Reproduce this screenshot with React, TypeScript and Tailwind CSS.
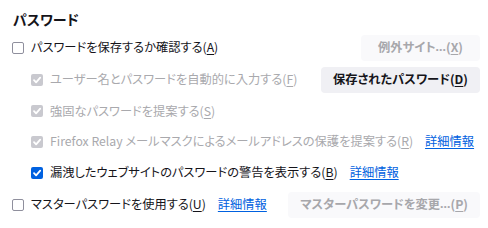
import React from "react";

const font = "font-['Noto_Sans_CJK_JP','Noto_Sans',sans-serif]";

function Box({ state }: { state: "off" | "on" | "dis" }) {
  if (state === "off")
    return <span className="w-[12px] h-[12px] shrink-0 rounded-[2px] border border-[#8f8f9d] bg-white" />;
  const bg = state === "on" ? "bg-[#0061e0]" : "bg-[#c9c9cf]";
  return (
    <span className={`w-[12px] h-[12px] shrink-0 rounded-[2px] ${bg} flex items-center justify-center`}>
      <svg width="10" height="10" viewBox="0 0 10 10">
        <path d="M2 5.2 L4.1 7.3 L8.2 2.7" fill="none" stroke="white" strokeWidth="1.8" strokeLinecap="round" strokeLinejoin="round" />
      </svg>
    </span>
  );
}

function Key({ k }: { k: string }) {
  return (
    <>
      (<span className="underline underline-offset-2">{k}</span>)
    </>
  );
}

function Dots() {
  return <span className="font-['Noto_Sans',sans-serif]">…</span>;
}

function Link() {
  return <span className="text-[#0061e0] underline underline-offset-2 ml-[5px] whitespace-nowrap">詳細情報</span>;
}

function Btn({ children, disabled, wide }: { children: React.ReactNode; disabled?: boolean; wide?: boolean }) {
  return (
    <div
      className={`h-[26px] px-[12px] rounded-[4px] flex items-center justify-center text-[12.25px] font-bold whitespace-nowrap shrink-0 ${
        wide ? "min-w-[119px]" : ""
      } ${disabled ? "bg-[#f9f9fb] text-[#a7a7ab]" : "bg-[#f0f0f4] text-[#15141a]"}`}
    >
      {children}
    </div>
  );
}

export default function App() {
  return (
    <div className={`w-[488px] h-[228px] bg-white text-[#15141a] ${font} [font-feature-settings:'palt'] pl-[12px] pr-[8px] whitespace-nowrap`}>
      <div className="pt-[10px] h-[32px] text-[14px] leading-[18px] font-bold pl-[1px]">パスワード</div>
      <div className="flex flex-col text-[12.25px]">
        <div className="h-[31px] flex items-center justify-between">
          <div className="flex items-center gap-[7px]">
            <Box state="off" />
            <span>パスワードを保存するか確認する<Key k="A" /></span>
          </div>
          <Btn disabled wide>例外サイト<Dots /><Key k="X" /></Btn>
        </div>
        <div className="h-[33px] flex items-center justify-between pl-[19px]">
          <div className="flex items-center gap-[7px] text-[#a9a9ad]">
            <Box state="dis" />
            <span>ユーザー名とパスワードを自動的に入力する<Key k="F" /></span>
          </div>
          <Btn>保存されたパスワード<Key k="D" /></Btn>
        </div>
        <div className="h-[30px] flex items-center pl-[19px]">
          <div className="flex items-center gap-[7px] text-[#a9a9ad]">
            <Box state="dis" />
            <span>強固なパスワードを提案する<Key k="S" /></span>
          </div>
        </div>
        <div className="h-[31px] flex items-center pl-[19px]">
          <div className="flex items-center gap-[7px]">
            <Box state="dis" />
            <span className="text-[#a9a9ad]">Firefox Relay メールマスクによるメールアドレスの保護を提案する<Key k="R" /></span>
            <Link />
          </div>
        </div>
        <div className="h-[31px] flex items-center pl-[19px]">
          <div className="flex items-center gap-[7px]">
            <Box state="on" />
            <span>漏洩したウェブサイトのパスワードの警告を表示する<Key k="B" /></span>
            <Link />
          </div>
        </div>
        <div className="h-[33px] flex items-center justify-between">
          <div className="flex items-center gap-[7px]">
            <Box state="off" />
            <span>マスターパスワードを使用する<Key k="U" /></span>
            <Link />
          </div>
          <Btn disabled>マスターパスワードを変更<Dots /><Key k="P" /></Btn>
        </div>
      </div>
    </div>
  );
}
